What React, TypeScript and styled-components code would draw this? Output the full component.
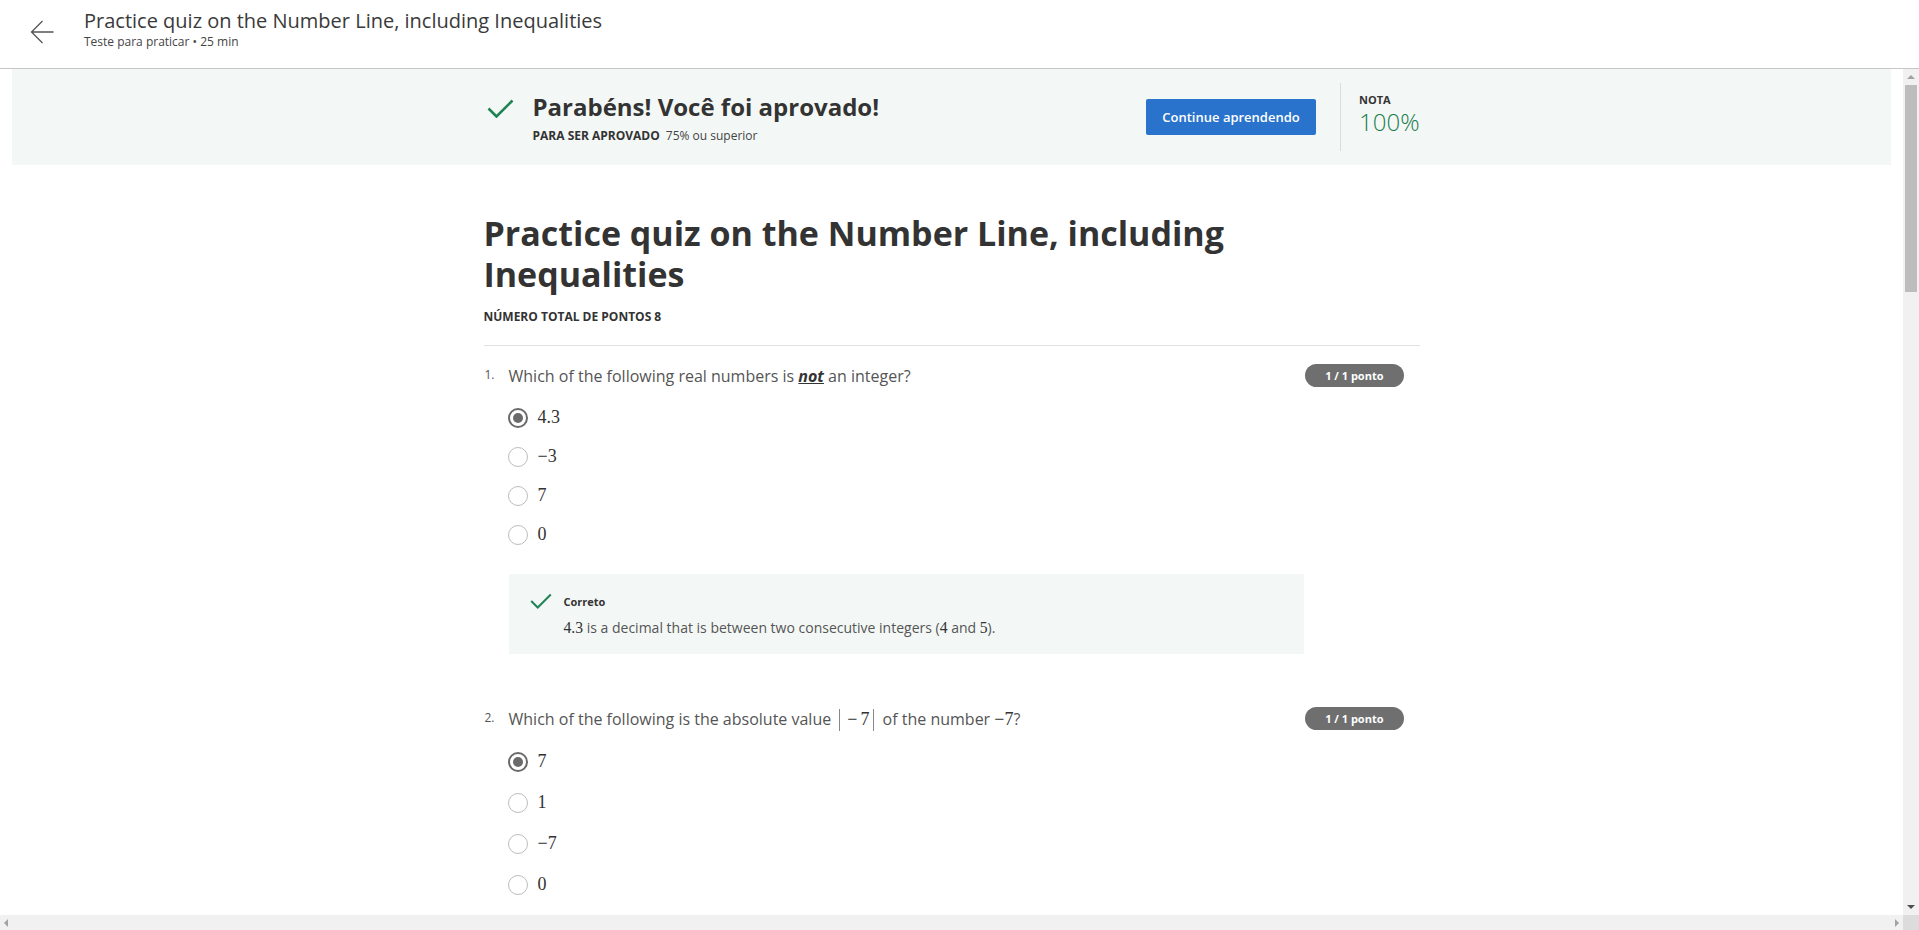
import React from "react";
import styled, { createGlobalStyle } from "styled-components";

const GlobalStyle = createGlobalStyle`
  html, body { margin: 0; padding: 0; height: 100%; overflow: hidden; }
  body { font-family: "Open Sans", "Liberation Sans", sans-serif; color: #333; background: #fff; }
  #root { height: 100%; }
  * { box-sizing: border-box; }
`;

const Page = styled.div`
  display: flex;
  flex-direction: column;
  width: 1919px;
  height: 930px;
`;

const Header = styled.header`
  flex-shrink: 0;
  height: 69px;
  border-bottom: 1px solid #c6c6c6;
  display: flex;
  align-items: flex-start;
  padding-left: 30px;
`;

const BackButton = styled.button`
  border: 0;
  background: none;
  padding: 0;
  margin-top: 20px;
  width: 24px;
  height: 24px;
  display: flex;
  color: #555;
  cursor: pointer;
`;

const HeaderText = styled.div`
  display: flex;
  flex-direction: column;
  margin-left: 30px;
  padding-top: 8px;
`;

const HeaderTitle = styled.div`
  font-size: 20px;
  line-height: 26px;
  font-weight: 400;
  color: #3a3a3a;
`;

const HeaderSub = styled.div`
  font-size: 12px;
  line-height: 16px;
  color: #444;
`;

const Middle = styled.div`
  flex: 1;
  min-height: 0;
  display: flex;
`;

const Viewport = styled.main`
  flex: 1;
  overflow: hidden;
  padding: 0 12px;
`;

const VScroll = styled.div`
  width: 16px;
  flex-shrink: 0;
  background: #f1f1f1;
  display: flex;
  flex-direction: column;
  align-items: center;
`;

const ScrollArrowBox = styled.div`
  height: 16px;
  width: 16px;
  display: flex;
  align-items: center;
  justify-content: center;
  flex-shrink: 0;
`;

const Thumb = styled.div`
  width: 12px;
  height: 207px;
  background: #bdbdbd;
`;

const Spacer = styled.div`
  flex: 1;
`;

const HScroll = styled.div`
  flex-shrink: 0;
  height: 15px;
  display: flex;
`;

const HTrack = styled.div`
  flex: 1;
  background: #f1f1f1;
  display: flex;
  align-items: center;
  justify-content: space-between;
  padding: 0 4px 0 4px;
`;

const Corner = styled.div`
  width: 16px;
  background: #dcdcdc;
`;

const Banner = styled.section`
  background: #f3f8f6;
  height: 96px;
  display: flex;
  justify-content: center;
`;

const Column = styled.div`
  width: 936px;
  margin: 0 auto;
`;

const BannerInner = styled.div`
  width: 936px;
  display: flex;
  align-items: center;
  justify-content: space-between;
  padding-left: 3px;
`;

const PassGroup = styled.div`
  display: flex;
  align-items: flex-start;
  gap: 19px;
`;

const CheckWrap = styled.div<{ $top: number }>`
  margin-top: ${(p) => p.$top}px;
  display: flex;
  flex-shrink: 0;
`;

const PassText = styled.div`
  display: flex;
  flex-direction: column;
  gap: 5px;
  margin-top: 1px;
`;

const PassHeadline = styled.h2`
  margin: 0;
  font-size: 24px;
  line-height: 32px;
  font-weight: 700;
  color: #333;
`;

const Requirement = styled.div`
  font-size: 12px;
  line-height: 16px;
  color: #444;
`;

const ReqLabel = styled.span`
  font-weight: 700;
  margin-right: 6px;
  color: #333;
`;

const GradeGroup = styled.div`
  display: flex;
  align-items: center;
`;

const PrimaryButton = styled.button`
  width: 170px;
  height: 36px;
  border: 0;
  border-radius: 2px;
  background: #2a73cc;
  color: #fff;
  font-family: "Open Sans", sans-serif;
  font-size: 13px;
  font-weight: 600;
  cursor: pointer;
`;

const VDivider = styled.div`
  width: 1px;
  height: 68px;
  background: #dcdcdc;
  margin: 0 18px 0 24px;
`;

const Grade = styled.div`
  display: flex;
  flex-direction: column;
  margin-top: -6px;
`;

const GradeLabel = styled.div`
  font-size: 11px;
  line-height: 16px;
  font-weight: 700;
  color: #333;
`;

const GradeValue = styled.div`
  font-size: 24px;
  line-height: 28px;
  font-weight: 300;
  color: #1b7d4e;
`;

const QuizTitle = styled.h1`
  margin: 48px 0 0;
  font-size: 34px;
  line-height: 41px;
  font-weight: 700;
  color: #333;
`;

const TotalPoints = styled.div`
  margin-top: 14px;
  font-size: 12px;
  line-height: 16px;
  font-weight: 700;
  color: #333;
`;

const HRule = styled.hr`
  margin: 20px 0 0;
  border: 0;
  border-top: 1px solid #e1e1e1;
`;

const Question = styled.section<{ $top: number }>`
  margin-top: ${(p) => p.$top}px;
`;

const QuestionHead = styled.div`
  display: flex;
  align-items: flex-start;
  padding-right: 16px;
`;

const QNumber = styled.div`
  width: 25px;
  flex-shrink: 0;
  font-size: 12px;
  line-height: 22px;
  color: #555;
  padding-left: 1px;
`;

const QText = styled.div`
  flex: 1;
  font-size: 16px;
  line-height: 24px;
  color: #555;
`;

const Emph = styled.span`
  font-weight: 700;
  font-style: italic;
  text-decoration: underline;
  color: #333;
`;

const MathText = styled.span`
  font-family: "Liberation Serif", "DejaVu Serif", serif;
  font-size: 1.12em;
  color: #333;
`;

const MathOp = styled.span`
  margin: 0 3px;
`;

const Abs = styled.span`
  display: inline-block;
  width: 1px;
  height: 22px;
  background: #888;
  vertical-align: -6px;
  margin: 0 4px;
`;

const Badge = styled.div`
  height: 23px;
  line-height: 23px;
  padding: 0 20px;
  border-radius: 12px;
  background: #6f6f6f;
  color: #fff;
  font-size: 11px;
  font-weight: 700;
  white-space: nowrap;
`;

const Options = styled.div`
  margin-top: 10px;
  padding-left: 24px;
  display: flex;
  flex-direction: column;
`;

const Option = styled.label<{ $h: number }>`
  height: ${(p) => p.$h}px;
  display: flex;
  align-items: center;
  gap: 10px;
`;

const Radio = styled.span<{ $checked?: boolean }>`
  width: 20px;
  height: 20px;
  border-radius: 50%;
  border: ${(p) => (p.$checked ? "2px solid #6a6a6a" : "1.5px solid #bdbdbd")};
  display: flex;
  align-items: center;
  justify-content: center;
  flex-shrink: 0;
  &::after {
    content: "";
    display: ${(p) => (p.$checked ? "block" : "none")};
    width: 10px;
    height: 10px;
    border-radius: 50%;
    background: #6a6a6a;
  }
`;

const OptionText = styled.span`
  font-family: "Liberation Serif", "DejaVu Serif", serif;
  font-size: 18px;
  color: #333;
`;

const Feedback = styled.div`
  margin: 20px 0 0 25px;
  width: 795px;
  height: 80px;
  background: #f3f8f6;
  padding: 19px 0 0 21px;
  display: flex;
  gap: 12px;
`;

const FeedbackBody = styled.div`
  display: flex;
  flex-direction: column;
  padding-top: 1px;
`;

const FeedbackTitle = styled.div`
  font-size: 11px;
  line-height: 16px;
  font-weight: 700;
  color: #333;
`;

const FeedbackText = styled.div`
  margin-top: 8px;
  font-size: 14px;
  line-height: 20px;
  color: #555;
`;

const Check = ({ w, h, sw }: { w: number; h: number; sw: number }) => (
  <svg width={w} height={h} viewBox="0 0 27 19" fill="none">
    <path d="M1.5 9.5 L9.5 17.5 L25.5 1.5" stroke="#1f8354" strokeWidth={sw} strokeLinecap="butt" />
  </svg>
);

const Tri = ({ dir }: { dir: "up" | "down" | "left" | "right" }) => {
  const pts: Record<string, string> = {
    up: "0,4 4,0 8,4",
    down: "0,0 8,0 4,4",
    left: "4,0 4,8 0,4",
    right: "0,0 0,8 4,4",
  };
  const vertical = dir === "up" || dir === "down";
  return (
    <svg width={vertical ? 8 : 4} height={vertical ? 4 : 8} viewBox={vertical ? "0 0 8 4" : "0 0 4 8"}>
      <polygon points={pts[dir]} fill={dir === "down" ? "#505050" : "#a3a3a3"} />
    </svg>
  );
};

type Opt = { text: string; checked?: boolean };

const q1Options: Opt[] = [
  { text: "4.3", checked: true },
  { text: "−3" },
  { text: "7" },
  { text: "0" },
];

const q2Options: Opt[] = [
  { text: "7", checked: true },
  { text: "1" },
  { text: "−7" },
  { text: "0" },
];

const OptionList = ({ items, h }: { items: Opt[]; h: number }) => (
  <Options>
    {items.map((o, i) => (
      <Option key={i} $h={h}>
        <Radio $checked={o.checked} />
        <OptionText>{o.text}</OptionText>
      </Option>
    ))}
  </Options>
);

export default function App() {
  return (
    <Page>
      <GlobalStyle />
      <Header>
        <BackButton aria-label="Voltar">
          <svg width="24" height="24" viewBox="0 0 24 24" fill="none">
            <path d="M23.5 12 H1.5 M12.5 1 L1.5 12 L12.5 23" stroke="#555" strokeWidth="1.3" />
          </svg>
        </BackButton>
        <HeaderText>
          <HeaderTitle>Practice quiz on the Number Line, including Inequalities</HeaderTitle>
          <HeaderSub>Teste para praticar • 25 min</HeaderSub>
        </HeaderText>
      </Header>
      <Middle>
        <Viewport>
          <Banner>
            <BannerInner>
              <PassGroup>
                <CheckWrap $top={9}>
                  <Check w={27} h={19} sw={2.6} />
                </CheckWrap>
                <PassText>
                  <PassHeadline>Parabéns! Você foi aprovado!</PassHeadline>
                  <Requirement>
                    <ReqLabel>PARA SER APROVADO</ReqLabel>75% ou superior
                  </Requirement>
                </PassText>
              </PassGroup>
              <GradeGroup>
                <PrimaryButton>Continue aprendendo</PrimaryButton>
                <VDivider />
                <Grade>
                  <GradeLabel>NOTA</GradeLabel>
                  <GradeValue>100%</GradeValue>
                </Grade>
              </GradeGroup>
            </BannerInner>
          </Banner>
          <Column>
            <QuizTitle>Practice quiz on the Number Line, including Inequalities</QuizTitle>
            <TotalPoints>NÚMERO TOTAL DE PONTOS 8</TotalPoints>
            <HRule />
            <Question $top={18}>
              <QuestionHead>
                <QNumber>1.</QNumber>
                <QText>
                  Which of the following real numbers is <Emph>not</Emph> an integer?
                </QText>
                <Badge>1 / 1 ponto</Badge>
              </QuestionHead>
              <OptionList items={q1Options} h={39} />
              <Feedback>
                <CheckWrap $top={0}>
                  <Check w={22} h={16} sw={2.4} />
                </CheckWrap>
                <FeedbackBody>
                  <FeedbackTitle>Correto</FeedbackTitle>
                  <FeedbackText>
                    <MathText>4.3</MathText> is a decimal that is between two consecutive integers (
                    <MathText>4</MathText> and <MathText>5</MathText>).
                  </FeedbackText>
                </FeedbackBody>
              </Feedback>
            </Question>
            <Question $top={53}>
              <QuestionHead>
                <QNumber>2.</QNumber>
                <QText>
                  Which of the following is the absolute value{" "}
                  <MathText>
                    <Abs />
                    <MathOp>−</MathOp>7<Abs />
                  </MathText>{" "}
                  of the number <MathText>−7</MathText>?
                </QText>
                <Badge>1 / 1 ponto</Badge>
              </QuestionHead>
              <OptionList items={q2Options} h={41} />
            </Question>
          </Column>
        </Viewport>
        <VScroll>
          <ScrollArrowBox>
            <Tri dir="up" />
          </ScrollArrowBox>
          <Thumb />
          <Spacer />
          <ScrollArrowBox>
            <Tri dir="down" />
          </ScrollArrowBox>
        </VScroll>
      </Middle>
      <HScroll>
        <HTrack>
          <Tri dir="left" />
          <Tri dir="right" />
        </HTrack>
        <Corner />
      </HScroll>
    </Page>
  );
}
